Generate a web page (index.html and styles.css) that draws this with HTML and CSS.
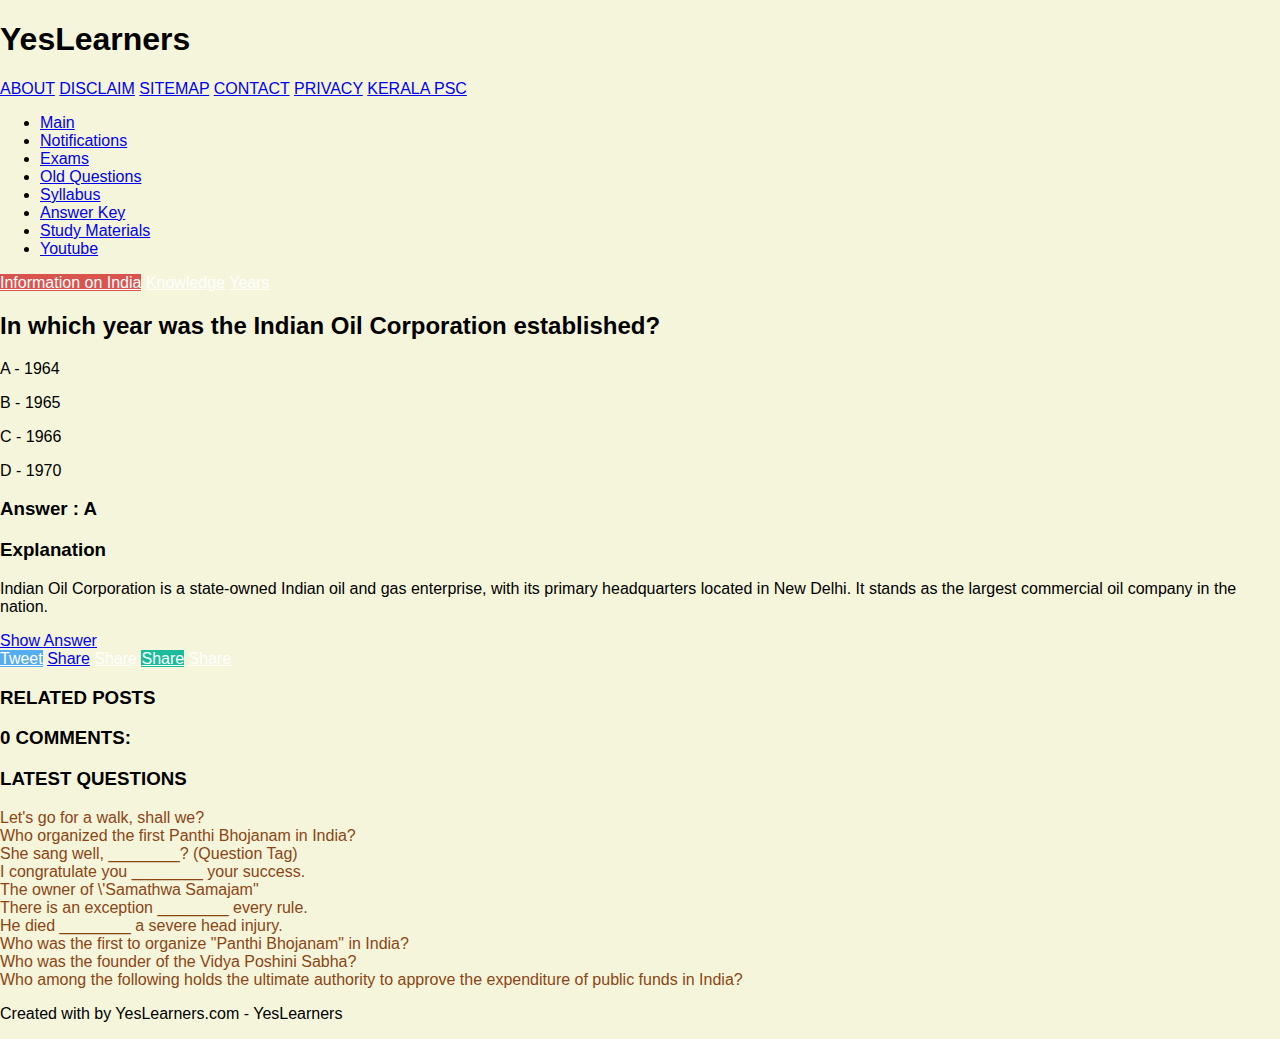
FILE: index.html
```html
<!DOCTYPE html>
<html>
<head>
<meta charset="utf-8">
<title>YesLearners</title>
<link rel="stylesheet" href="styles.css">
</head>
<body>
<h1 class="site-title">YesLearners</h1>
<div class="top-nav"><a href="#">ABOUT</a> <a href="#">DISCLAIM</a> <a href="#">SITEMAP</a> <a href="#">CONTACT</a> <a href="#">PRIVACY</a> <a href="#">KERALA PSC</a></div>
<ul class="menu">
<li><a href="#">Main</a></li>
<li><a href="#">Notifications</a></li>
<li><a href="#">Exams</a></li>
<li><a href="#">Old Questions</a></li>
<li><a href="#">Syllabus</a></li>
<li><a href="#">Answer Key</a></li>
<li><a href="#">Study Materials</a></li>
<li><a href="#">Youtube</a></li>
</ul>
<div class="tags"><a class="tag tag-red" href="#">Information on India</a> <a class="tag" href="#">Knowledge</a> <a class="tag" href="#">Years</a></div>
<h2 class="question">In which year was the Indian Oil Corporation established?</h2>
<p>A - 1964</p>
<p>B - 1965</p>
<p>C - 1966</p>
<p>D - 1970</p>
<h3>Answer : A</h3>
<h3>Explanation</h3>
<p>Indian Oil Corporation is a state-owned Indian oil and gas enterprise, with its primary headquarters located in New Delhi. It stands as the largest commercial oil company in the nation.</p>
<div><a href="#">Show Answer</a></div>
<div class="share"><a class="sh sh-tweet" href="#">Tweet</a> <a href="#">Share</a> <a class="sh" href="#">Share</a> <a class="sh sh-teal" href="#">Share</a> <a class="sh" href="#">Share</a></div>
<h3 class="section">Related Posts</h3>
<h3 class="section">0 Comments:</h3>
<h3 class="section">Latest Questions</h3>
<div class="latest">
<div><a href="#">Let's go for a walk, shall we?</a></div>
<div><a href="#">Who organized the first Panthi Bhojanam in India?</a></div>
<div><a href="#">She sang well, ________? (Question Tag)</a></div>
<div><a href="#">I congratulate you ________ your success.</a></div>
<div><a href="#">The owner of \'Samathwa Samajam"</a></div>
<div><a href="#">There is an exception ________ every rule.</a></div>
<div><a href="#">He died ________ a severe head injury.</a></div>
<div><a href="#">Who was the first to organize "Panthi Bhojanam" in India?</a></div>
<div><a href="#">Who was the founder of the Vidya Poshini Sabha?</a></div>
<div><a href="#">Who among the following holds the ultimate authority to approve the expenditure of public funds in India?</a></div>
</div>
<p class="footer">Created with by YesLearners.com - YesLearners</p>
</body>
</html>
```
FILE: styles.css
```css
html { background: #f5f5dc; }
body {
  margin: 0;
  background: #f5f5dc;
  font-family: "Liberation Sans", Arial, sans-serif;
  font-size: 16px;
  color: #000;
}
a { color: #0000ee; }
.tag, .sh { color: #fff; }
.tag-red { background: #d9534f; }
.sh-tweet { background: #55acee; }
.sh-teal { background: #1abc9c; }
.section { text-transform: uppercase; }
.latest a { color: #8b4513; text-decoration: none; }
```
